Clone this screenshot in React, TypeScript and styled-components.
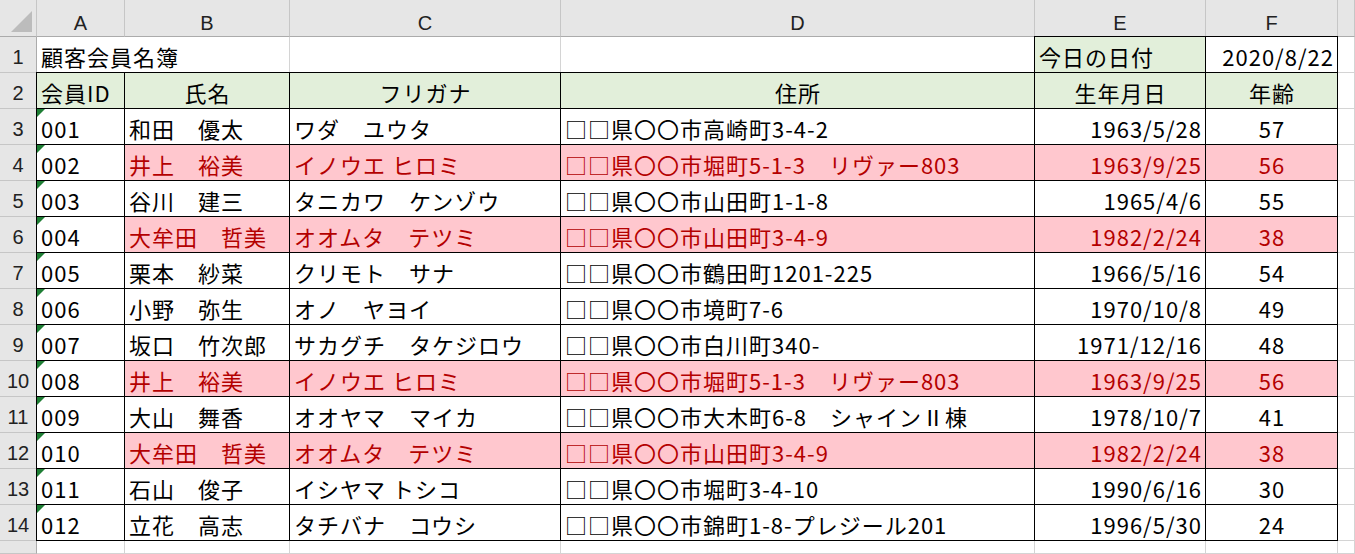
import React from 'react';
import styled, { createGlobalStyle } from 'styled-components';

const GlobalStyle = createGlobalStyle`
  body {
    margin: 0;
    background: #ffffff;
    font-family: "Noto Sans CJK JP", "Liberation Sans", sans-serif;
  }
`;

const cols = ['A', 'B', 'C', 'D', 'E', 'F'];

type Member = {
  id: string;
  name: string;
  kana: string;
  address: string;
  birth: string;
  age: number;
  dup?: boolean;
};

const members: Member[] = [
  { id: '001', name: '和田　優太', kana: 'ワダ　ユウタ', address: '□□県〇〇市高崎町3-4-2', birth: '1963/5/28', age: 57 },
  { id: '002', name: '井上　裕美', kana: 'イノウエ ヒロミ', address: '□□県〇〇市堀町5-1-3　リヴァー803', birth: '1963/9/25', age: 56, dup: true },
  { id: '003', name: '谷川　建三', kana: 'タニカワ　ケンゾウ', address: '□□県〇〇市山田町1-1-8', birth: '1965/4/6', age: 55 },
  { id: '004', name: '大牟田　哲美', kana: 'オオムタ　テツミ', address: '□□県〇〇市山田町3-4-9', birth: '1982/2/24', age: 38, dup: true },
  { id: '005', name: '栗本　紗菜', kana: 'クリモト　サナ', address: '□□県〇〇市鶴田町1201-225', birth: '1966/5/16', age: 54 },
  { id: '006', name: '小野　弥生', kana: 'オノ　ヤヨイ', address: '□□県〇〇市境町7-6', birth: '1970/10/8', age: 49 },
  { id: '007', name: '坂口　竹次郎', kana: 'サカグチ　タケジロウ', address: '□□県〇〇市白川町340-', birth: '1971/12/16', age: 48 },
  { id: '008', name: '井上　裕美', kana: 'イノウエ ヒロミ', address: '□□県〇〇市堀町5-1-3　リヴァー803', birth: '1963/9/25', age: 56, dup: true },
  { id: '009', name: '大山　舞香', kana: 'オオヤマ　マイカ', address: '□□県〇〇市大木町6-8　シャインⅡ棟', birth: '1978/10/7', age: 41 },
  { id: '010', name: '大牟田　哲美', kana: 'オオムタ　テツミ', address: '□□県〇〇市山田町3-4-9', birth: '1982/2/24', age: 38, dup: true },
  { id: '011', name: '石山　俊子', kana: 'イシヤマ トシコ', address: '□□県〇〇市堀町3-4-10', birth: '1990/6/16', age: 30 },
  { id: '012', name: '立花　高志', kana: 'タチバナ　コウシ', address: '□□県〇〇市錦町1-8-プレジール201', birth: '1996/5/30', age: 24 },
];

const App = () => (
  <Sheet>
    <GlobalStyle />
    <Corner>
      <svg width="22" height="22" viewBox="0 0 22 22">
        <polygon points="21,0 21,21 0,21" fill="#bcbcbc" />
      </svg>
    </Corner>
    {cols.map((c) => (
      <ColHead key={c}>{c}</ColHead>
    ))}
    <ColHead />

    <RowHead>1</RowHead>
    <Cell span={2} dark="bottom">顧客会員名簿</Cell>
    <Cell dark="bottom" />
    <Cell dark="bottom" />
    <Cell box fill="#e2efda">今日の日付</Cell>
    <Cell box align="right">2020/8/22</Cell>
    <Cell />

    <RowHead>2</RowHead>
    {['会員ID', '氏名', 'フリガナ', '住所', '生年月日', '年齢'].map((h, i) => (
      <Cell key={h} box fill="#e2efda" align={i === 0 ? 'left' : 'center'}>
        {h}
      </Cell>
    ))}
    <Cell />

    {members.map((m, i) => {
      const fill = m.dup ? '#ffc7ce' : undefined;
      const color = m.dup ? '#b40000' : undefined;
      return (
        <React.Fragment key={m.id}>
          <RowHead>{i + 3}</RowHead>
          <Cell box>
            <Flag />
            {m.id}
          </Cell>
          <Cell box fill={fill} color={color}>{m.name}</Cell>
          <Cell box fill={fill} color={color}>{m.kana}</Cell>
          <Cell box fill={fill} color={color}>{m.address}</Cell>
          <Cell box fill={fill} color={color} align="right">{m.birth}</Cell>
          <Cell box fill={fill} color={color} align="center">{m.age}</Cell>
          <Cell />
        </React.Fragment>
      );
    })}

    <RowHead />
    {cols.map((c) => (
      <Cell key={c} />
    ))}
    <Cell />
  </Sheet>
);

export default App;

const Sheet = styled.div`
  display: grid;
  grid-template-columns: 37px 88px 165px 271px 474px 171px 132px 17px;
  grid-template-rows: 37px repeat(14, 36px) 13px;
  width: 1355px;
  height: 554px;
  overflow: hidden;
  font-size: 22px;
  letter-spacing: 1px;
  color: #000;
`;

const Corner = styled.div`
  background: #e6e6e6;
  border-right: 1px solid #c6c6c6;
  border-bottom: 1px solid #ababab;
  display: flex;
  align-items: flex-end;
  justify-content: flex-end;
  padding: 0 3px 3px 0;
`;

const ColHead = styled.div`
  background: #e6e6e6;
  border-right: 1px solid #c6c6c6;
  border-bottom: 1px solid #ababab;
  display: flex;
  align-items: center;
  justify-content: center;
  font-family: "Liberation Sans", sans-serif;
  font-size: 20px;
  letter-spacing: 0;
  color: #222;
  padding-top: 10px;
  &:empty {
    padding: 0;
  }
`;

const RowHead = styled.div`
  background: #e6e6e6;
  border-right: 1px solid #ababab;
  border-bottom: 1px solid #c6c6c6;
  display: flex;
  align-items: center;
  justify-content: center;
  font-family: "Liberation Sans", sans-serif;
  font-size: 20px;
  letter-spacing: 0;
  color: #222;
  padding-top: 6px;
`;

const Cell = styled.div<{
  span?: number;
  box?: boolean;
  dark?: 'bottom';
  fill?: string;
  color?: string;
  align?: 'left' | 'center' | 'right';
}>`
  position: relative;
  grid-column: span ${(p) => p.span ?? 1};
  display: flex;
  align-items: center;
  justify-content: ${(p) =>
    p.align === 'right' ? 'flex-end' : p.align === 'center' ? 'center' : 'flex-start'};
  padding: 3px 3px 0 4px;
  white-space: pre;
  overflow: visible;
  background: ${(p) => p.fill ?? '#ffffff'};
  color: ${(p) => p.color ?? '#000'};
  border-right: 1px solid ${(p) => (p.box ? '#000' : '#d4d4d4')};
  border-bottom: 1px solid ${(p) => (p.box || p.dark ? '#000' : '#d4d4d4')};
  margin-left: ${(p) => (p.box ? '-1px' : '0')};
  border-left: ${(p) => (p.box ? '1px solid #000' : 'none')};
  margin-top: ${(p) => (p.box ? '-1px' : '0')};
  border-top: ${(p) => (p.box ? '1px solid #000' : 'none')};
`;

const Flag = styled.span`
  position: absolute;
  left: 0;
  top: 0;
  width: 0;
  height: 0;
  border-top: 8px solid #1e7e34;
  border-right: 8px solid transparent;
`;
